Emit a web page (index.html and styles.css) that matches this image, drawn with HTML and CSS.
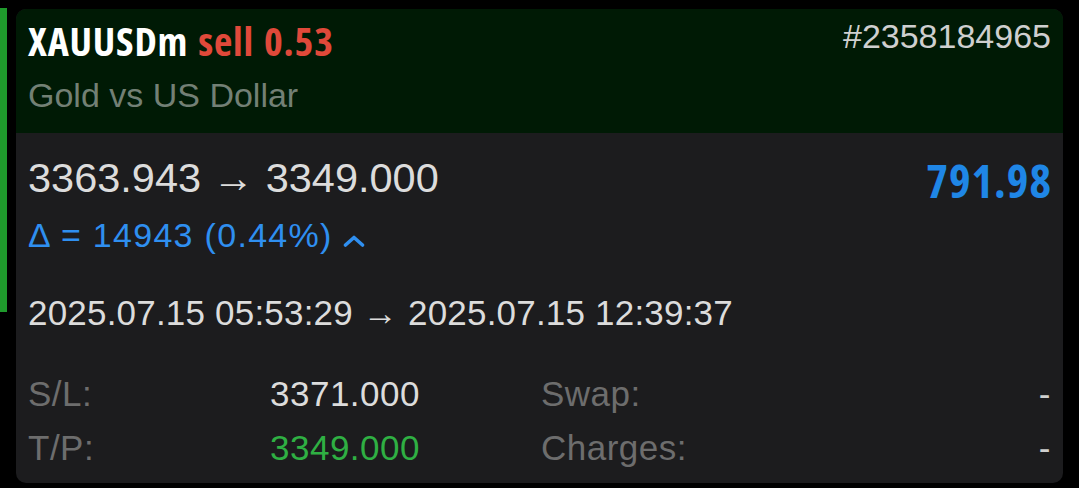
FILE: index.html
```html
<!DOCTYPE html>
<html lang="en">
  <head>
    <meta charset="UTF-8" />
    <title>XAUUSDm position</title>
    <link rel="stylesheet" href="styles.css">
  </head>
  <body>
    <div class="page">
      <div class="side-bar"></div>

      <div class="card">
        <div class="head">
          <div class="head-row">
            <div class="symbol">XAUUSDm <span class="side">sell 0.53</span></div>
            <div class="ticket">#2358184965</div>
          </div>
          <div class="desc">Gold vs US Dollar</div>
        </div>

        <div class="body">
          <div class="price-row">
            <div class="prices">3363.943 &rarr; 3349.000</div>
            <div class="profit">791.98</div>
          </div>
          <div class="delta">&Delta; = 14943 (0.44%) <svg class="chevron" width="22" height="12" viewBox="0 0 22 12"><path d="M2.5 10 L11 2.5 L19.5 10" fill="none" stroke="#2f8ff0" stroke-width="3.6" stroke-linecap="round" stroke-linejoin="round" /></svg></div>

          <div class="times">2025.07.15 05:53:29 &rarr; 2025.07.15 12:39:37</div>

          <div class="grid">
            <div class="label">S/L:</div>
            <div class="value">3371.000</div>
            <div class="label">Swap:</div>
            <div class="dash">-</div>

            <div class="label">T/P:</div>
            <div class="value tp">3349.000</div>
            <div class="label">Charges:</div>
            <div class="dash">-</div>
          </div>
        </div>
      </div>
    </div>
  </body>
</html>
```

FILE: styles.css
```css
body {
  margin: 0;
  background: #000;
  font-family: "Liberation Sans", Arial, sans-serif;
  color: #d9d9d9;
}

.page {
  display: flex;
  align-items: flex-start;
  gap: 9px;
  padding-top: 8px;
  height: 480px;
}

.side-bar {
  width: 7px;
  height: 304px;
  background: #1f9a2c;
}

.card {
  width: 1047px;
  margin-top: 1px;
  height: 474px;
  border-radius: 10px;
  overflow: hidden;
  background: #1c1c1e;
}

.head {
  background: #001a05;
  height: 124px;
  box-sizing: border-box;
  padding: 10px 12px 0 12px;
}

.head-row {
  display: flex;
  justify-content: space-between;
  align-items: flex-start;
}

.symbol {
  font-family: "Open Sans", "Roboto Condensed", sans-serif;
  font-stretch: 75%;
  font-weight: bold;
  font-size: 40px;
  line-height: 44px;
  letter-spacing: 0.8px;
  word-spacing: 2px;
  color: #fff;
}

.side {
  color: #e0493a;
}

.ticket {
  font-size: 34px;
  line-height: 40px;
  color: #cfcfcf;
  margin-top: -3px;
}

.desc {
  font-size: 34px;
  line-height: 40px;
  color: #738075;
  margin-top: 12px;
}

.body {
  padding: 21px 12px 0 12px;
}

.price-row {
  display: flex;
  justify-content: space-between;
  align-items: flex-start;
}

.prices {
  font-size: 41.5px;
  line-height: 48px;
  color: #dcdcdc;
}

.profit {
  font-family: "Open Sans", "Roboto Condensed", sans-serif;
  font-stretch: 75%;
  font-weight: bold;
  font-size: 46px;
  line-height: 48px;
  letter-spacing: 1px;
  margin-right: -1px;
  color: #1f86e6;
  margin-top: 2px;
}

.delta {
  font-size: 34px;
  line-height: 40px;
  letter-spacing: 1.3px;
  color: #2f8ff0;
  margin-top: 11px;
}

.times {
  font-size: 35px;
  line-height: 40px;
  letter-spacing: 0.2px;
  color: #dcdcdc;
  margin-top: 38px;
}

.grid {
  display: grid;
  grid-template-columns: 242px 271px 1fr auto;
  row-gap: 14px;
  margin-top: 41px;
  font-size: 35px;
  line-height: 40px;
  letter-spacing: 0.5px;
}

.label {
  color: #6d6d6d;
}

.value {
  color: #dcdcdc;
}

.value.tp {
  color: #2fb043;
}

.dash {
  color: #cfcfcf;
}
```
